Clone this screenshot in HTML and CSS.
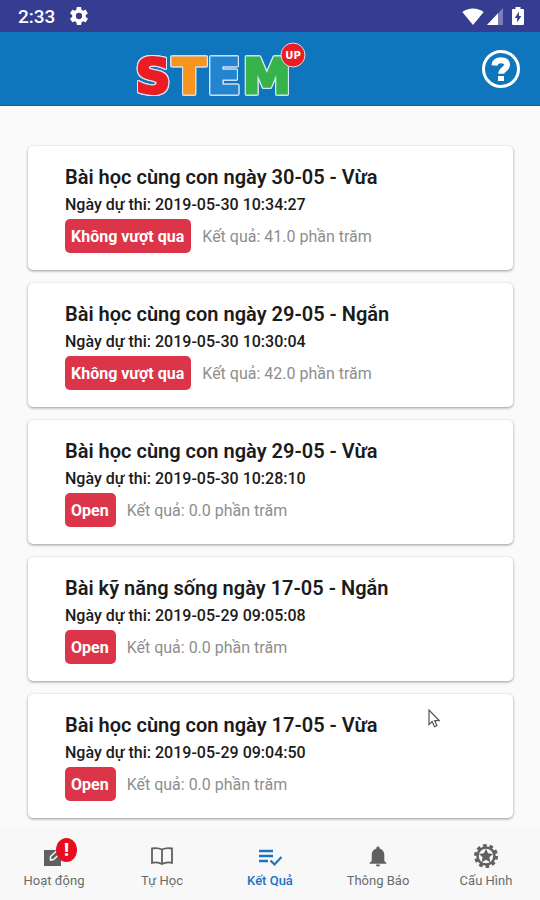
FILE: index.html
```html
<!DOCTYPE html>
<html lang="vi">
<head>
<meta charset="UTF-8">
<meta name="viewport" content="width=device-width, initial-scale=1.0">
<title>STEM UP - Kết Quả</title>
<link rel="stylesheet" href="styles.css">
</head>
<body>

<div class="status-bar">
  <span class="clock">2:33</span>
  <svg class="status-gear" viewBox="2 2 20 20" width="18" height="18"><path fill="#fff" fill-rule="evenodd" d="M19.4 13c0-.3.1-.6.1-1s0-.7-.1-1l2.1-1.600c.2-.2.3-.4.1-.7l-2-3.400c-.1-.2-.4-.3-.6-.2l-2.500 1c-.5-.4-1.100-.7-1.700-1l-.4-2.600c0-.3-.2-.5-.5-.5h-4c-.2 0-.4.200-.5.5l-.3 2.600c-.6.300-1.200.600-1.700 1l-2.500-1c-.2-.1-.5 0-.6.200l-2 3.400c-.1.300-.1.500.1.700L4.500 11c0 .3-.1.600-.1 1s0 .700.1 1l-2.100 1.600c-.2.200-.2.400-.1.700l2 3.400c.1.200.4.300.6.200l2.500-1c.5.400 1.100.700 1.700 1l.4 2.600c0 .3.200.5.5.5h4c.2 0 .4-.2.500-.5l.4-2.600c.6-.3 1.200-.6 1.700-1l2.500 1c.2.100.5 0 .6-.2l2-3.400c.1-.3.100-.5-.1-.7L19.400 13zM12 15.500a3.500 3.500 0 1 1 0-7 3.500 3.500 0 0 1 0 7z"/></svg>
  <div class="status-icons">
    <svg viewBox="0 0 22 17" width="22" height="17"><path fill="#fff" d="M11 17 .3 4Q5 .4 11 .4T21.700 4z"/></svg>
    <svg viewBox="0 0 16 17" width="16" height="17"><path fill="#fff" fill-opacity=".35" d="M16 0v17H0z"/><path fill="#fff" d="M11 5.300V17H0z"/></svg>
    <svg class="battery" viewBox="0 0 12 18" width="12" height="18"><path fill="#fff" d="M3.500 0h5v2H11q1 0 1 1v14q0 1-1 1H1q-1 0-1-1V3q0-1 1-1h2.500z"/><path fill="#343d8f" d="M7 4.500 2.800 11h2.400v4.500L9.300 9H7z"/></svg>
  </div>
</div>

<header class="header">
  <svg class="logo" viewBox="0 0 174 73" width="174" height="73" role="img" aria-label="STEM UP">
    <g class="logo-letters">
      <text class="letter-s" x="20" y="61">S</text>
      <text class="letter-t" x="56" y="61">T</text>
      <text class="letter-e" x="91" y="61">E</text>
      <text class="letter-m" x="134" y="61">M</text>
    </g>
    <circle cx="160" cy="23" r="12" fill="#ec1c24" stroke="#d8dff0"/>
    <text class="logo-up" x="160" y="27">UP</text>
  </svg>
  <button class="help" type="button" aria-label="Trợ giúp">
    <svg viewBox="0 0 38 38" width="38" height="38" fill="none" stroke="#fff"><circle cx="19" cy="19" r="17.500" stroke-width="3"/><path stroke-width="6" d="M12.500 15.500C13 11.500 15.500 10.300 19 10.300c4 0 6 1.800 6 4.700 0 4-5.800 4.200-5.800 8.800"/><path stroke-width="5" d="M16 28.500h6"/></svg>
  </button>
</header>

<main class="results">
  <article class="card">
    <h2 class="card-title">Bài học cùng con ngày 30-05 - Vừa</h2>
    <p class="card-date">Ngày dự thi: 2019-05-30 10:34:27</p>
    <div class="card-result">
      <span class="badge">Không vượt qua</span>
      <span class="score">Kết quả: 41.0 phần trăm</span>
    </div>
  </article>
  <article class="card">
    <h2 class="card-title">Bài học cùng con ngày 29-05 - Ngắn</h2>
    <p class="card-date">Ngày dự thi: 2019-05-30 10:30:04</p>
    <div class="card-result">
      <span class="badge">Không vượt qua</span>
      <span class="score">Kết quả: 42.0 phần trăm</span>
    </div>
  </article>
  <article class="card">
    <h2 class="card-title">Bài học cùng con ngày 29-05 - Vừa</h2>
    <p class="card-date">Ngày dự thi: 2019-05-30 10:28:10</p>
    <div class="card-result">
      <span class="badge">Open</span>
      <span class="score">Kết quả: 0.0 phần trăm</span>
    </div>
  </article>
  <article class="card">
    <h2 class="card-title">Bài kỹ năng sống ngày 17-05 - Ngắn</h2>
    <p class="card-date">Ngày dự thi: 2019-05-29 09:05:08</p>
    <div class="card-result">
      <span class="badge">Open</span>
      <span class="score">Kết quả: 0.0 phần trăm</span>
    </div>
  </article>
  <article class="card">
    <h2 class="card-title">Bài học cùng con ngày 17-05 - Vừa</h2>
    <p class="card-date">Ngày dự thi: 2019-05-29 09:04:50</p>
    <div class="card-result">
      <span class="badge">Open</span>
      <span class="score">Kết quả: 0.0 phần trăm</span>
    </div>
    <svg class="pointer" viewBox="0 0 12 19" width="12" height="19"><path fill="#fff" stroke="#555" stroke-width="1.200" d="M1 1v14.500l3.200-3 2.300 5.300 2.400-1-2.200-5.200h4.500z"/></svg>
  </article>
</main>

<nav class="tabs">
  <a class="tab" href="#">
    <span class="tab-icon">
      <svg viewBox="0 0 24 24" width="24" height="24"><path fill="#606060" d="M2 6h17v16H2z"/><path fill="none" stroke="#f8f8f8" stroke-width="1.500" d="M8.500 16v-3.500l6-5.500 3 3-6 5.500z"/></svg>
      <span class="alert">!</span>
    </span>
    Hoạt động
  </a>
  <a class="tab" href="#">
    <span class="tab-icon">
      <svg viewBox="0 0 24 24" width="24" height="24" fill="none" stroke="#606060" stroke-width="1.800"><path d="M12 5.500C9 4 5 3.800 2 4.500v14.300c3-.7 7-.5 10 1.200 3-1.700 7-1.900 10-1.200V4.500c-3-.7-7-.5-10 1zM12 5.500V20"/></svg>
    </span>
    Tự Học
  </a>
  <a class="tab active" href="#">
    <span class="tab-icon">
      <svg viewBox="0 0 24 24" width="24" height="24" fill="none" stroke="#1c74bf"><path stroke-width="2.500" d="M1 7h14M1 12h14M1 17h9"/><path stroke-width="2.200" d="m12.500 16.500 4 4 7-7.500"/></svg>
    </span>
    Kết Quả
  </a>
  <a class="tab" href="#">
    <span class="tab-icon">
      <svg viewBox="0 0 24 24" width="24" height="24"><path fill="#606060" d="M12 22.500c1.300 0 2.200-.8 2.200-2H9.800c0 1.200.9 2 2.200 2zM18.300 17v-6c0-3.300-1.700-5.800-4.700-6.600v-.3c0-1-.6-1.600-1.600-1.600s-1.600.6-1.600 1.600v.3C7.400 5.200 5.700 7.700 5.700 11v6l-2 1.800v.9h16.600v-.9z"/></svg>
    </span>
    Thông Báo
  </a>
  <a class="tab" href="#">
    <span class="tab-icon">
      <svg viewBox="0 0 24 24" width="24" height="24" fill="none" stroke="#606060"><circle cx="12" cy="12" r="8.500" stroke-width="2.500"/><circle cx="12" cy="12" r="10.500" stroke-width="3" stroke-dasharray="3.600 3"/><path fill="#606060" stroke="none" d="m12 4.800 2.100 4.500 4.900.6-3.600 3.400.9 4.900-4.300-2.400-4.300 2.400.9-4.900L5 9.900l4.900-.6z"/></svg>
    </span>
    Cấu Hình
  </a>
</nav>

</body>
</html>
```
FILE: styles.css
```css
* {
  box-sizing: border-box;
}
body {
  display: flex;
  flex-direction: column;
  min-height: 100vh;
  margin: 0;
  background-color: #fafafa;
  color: #1b1b1b;
  font-family: Roboto, "Liberation Sans", sans-serif;
}

/* status bar */
.status-bar {
  display: flex;
  align-items: center;
  height: 32px;
  padding: 0 16px 0 18px;
  background-color: #343d8f;
  color: #fff;
}
.clock {
  font-size: 19px;
  font-weight: 500;
}
.status-gear {
  margin-left: 15px;
}
.status-icons {
  display: flex;
  align-items: center;
  gap: 3px;
  margin-left: auto;
}
.battery {
  margin-left: 6px;
}

/* header */
.header {
  display: grid;
  grid-template-columns: 1fr auto 1fr;
  align-items: center;
  height: 74px;
  padding: 0 20px;
  background-color: #0f75bc;
  border-bottom: 1px solid #0b62a0;
}
.logo {
  grid-column: 2;
  margin: 0 50px 0 -50px;
}
.logo-letters {
  font: bold 48px "DejaVu Sans", sans-serif;
  text-anchor: middle;
  stroke-width: 3px;
}
/* thin light outline round each letter */
.logo-letters text {
  filter: drop-shadow(1px 0 0 #d8e6f5) drop-shadow(-1px 0 0 #d8e6f5) drop-shadow(0 1px 0 #d8e6f5) drop-shadow(0 -1px 0 #d8e6f5);
}
.letter-s {
  fill: #ec1c24;
  stroke: #ec1c24;
}
.letter-t {
  fill: #f7941e;
  stroke: #f7941e;
}
.letter-e {
  fill: #2384cf;
  stroke: #2384cf;
}
.letter-m {
  fill: #36b34a;
  stroke: #36b34a;
}
.logo-up {
  fill: #fff;
  font: bold 10px "DejaVu Sans", sans-serif;
  text-anchor: middle;
}
.help {
  justify-self: end;
  padding: 0;
  border: 0;
  background: none;
  cursor: pointer;
}
.help svg {
  display: block;
}

/* result list */
.results {
  display: flex;
  flex: 1;
  flex-direction: column;
  gap: 13px;
  padding: 40px 27px 9px 28px;
}
.card {
  position: relative;
  padding: 17px 37px;
  border-radius: 5px;
  background-color: #fff;
  box-shadow: 0 1px 3px rgba(0, 0, 0, 0.4);
}
.card-title {
  margin: 0;
  font-size: 20px;
  font-weight: 600;
  line-height: 28px;
}
.card-date {
  margin: 0;
  font-size: 16px;
  font-weight: 500;
  line-height: 28px;
}
.card-result {
  display: flex;
  align-items: center;
  gap: 11px;
}
.badge {
  padding: 1px 7px 0 6px;
  border-radius: 5px;
  background-color: #dc3549;
  color: #fff;
  font-size: 16px;
  font-weight: 700;
  line-height: 33px;
}
.score {
  padding-top: 1px;
  color: #8e8e8e;
  font-size: 16px;
}
.pointer {
  position: absolute;
  top: 15px;
  right: 73px;
}

/* bottom tabs */
.tabs {
  position: sticky;
  bottom: 0;
  display: flex;
  height: 72px;
  background-color: #f8f8f8;
}
.tab {
  display: flex;
  flex: 1;
  flex-direction: column;
  align-items: center;
  gap: 4px;
  padding-top: 16px;
  color: #6b6b6b;
  font-size: 13px;
  line-height: 18px;
  text-decoration: none;
}
.tab.active {
  color: #1c74bf;
  font-weight: 500;
}
.tab-icon {
  position: relative;
  height: 24px;
}
.alert {
  position: absolute;
  top: -6px;
  left: 14px;
  width: 21px;
  height: 24px;
  border-radius: 50%;
  background-color: #e90b1e;
  color: #fff;
  font-size: 18px;
  font-weight: 900;
  line-height: 24px;
  text-align: center;
}
```
